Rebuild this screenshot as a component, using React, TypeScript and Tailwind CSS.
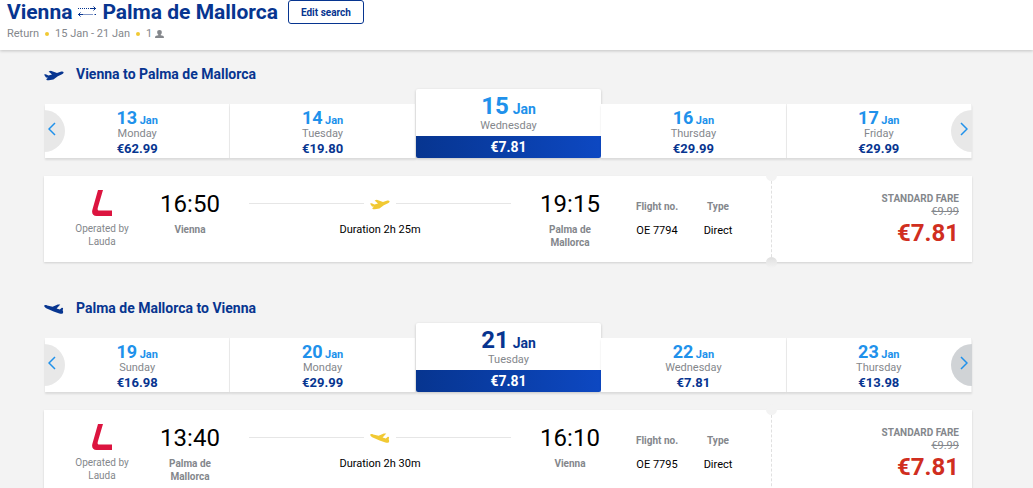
interface Fare {
  day: number;
  weekday: string;
  price: string;
}

interface Journey {
  id: string;
  from: string;
  to: string;
  direction: 'out' | 'back';
  fares: Fare[];
  departs: string;
  arrives: string;
  duration: string;
  flightNo: string;
}

const SELECTED = 2;

const journeys: Journey[] = [
  {
    id: 'outbound',
    from: 'Vienna',
    to: 'Palma de Mallorca',
    direction: 'out',
    fares: [
      { day: 13, weekday: 'Monday', price: '€62.99' },
      { day: 14, weekday: 'Tuesday', price: '€19.80' },
      { day: 15, weekday: 'Wednesday', price: '€7.81' },
      { day: 16, weekday: 'Thursday', price: '€29.99' },
      { day: 17, weekday: 'Friday', price: '€29.99' },
    ],
    departs: '16:50',
    arrives: '19:15',
    duration: '2h 25m',
    flightNo: 'OE 7794',
  },
  {
    id: 'inbound',
    from: 'Palma de Mallorca',
    to: 'Vienna',
    direction: 'back',
    fares: [
      { day: 19, weekday: 'Sunday', price: '€16.98' },
      { day: 20, weekday: 'Monday', price: '€29.99' },
      { day: 21, weekday: 'Tuesday', price: '€7.81' },
      { day: 22, weekday: 'Wednesday', price: '€7.81' },
      { day: 23, weekday: 'Thursday', price: '€13.98' },
    ],
    departs: '13:40',
    arrives: '16:10',
    duration: '2h 30m',
    flightNo: 'OE 7795',
  },
];

function Plane({ direction, className }: { direction: 'out' | 'back'; className: string }) {
  if (direction === 'out') {
    return (
      <svg viewBox="0 -3 20 14" className={`h-3.5 w-5 ${className}`} fill="currentColor" aria-hidden="true">
        <path d="M0 4.6 1.8 4.2 4.4 5.4 8 4.4 4.6 1.6 6.8.8 13 3 16.6 1.8C18 1.4 19.3 1.5 19.6 2.3 19.8 3.1 18.8 4 17.5 4.6L13.8 6.2 9.4 9.6 4.8 10.3C3 10.5 2.2 9.9 2.4 9L4 7.8 2 7.5Z" />
      </svg>
    );
  }
  return (
    <svg viewBox="0 -2 20 14" className={`h-3.5 w-5 ${className}`} fill="currentColor" aria-hidden="true">
      <path d="M.2 2.6C.5 1.9 1.8 1.9 3.2 2.4L8.6 3.8 13.8 1.5 16.3 1.6 12.6 5.4 15.8 6.6 17.8 4.8 19.1 5.1 18.7 7.5C19.3 8.6 19.3 9.6 18.8 10.2 18.2 11 16.6 10.8 15.4 10.4L9.6 8.6 2.2 5.2C.8 4.4 0 3.4.2 2.6Z" />
    </svg>
  );
}

function RouteArrows() {
  return (
    <svg viewBox="0 0 20 14" className="h-3.5 w-5" aria-hidden="true">
      <path d="M1 3.5H15" stroke="#073590" strokeDasharray="1 1" />
      <path d="M14 3.5H19M16.5 1.5 18.5 3.5 16.5 5.5" stroke="#073590" fill="none" />
      <path d="M5 9.5H16" stroke="#8398c8" />
      <path d="M1 9.5H6M3.5 7.5 1.5 9.5 3.5 11.5" stroke="#073590" fill="none" />
      <path d="M17.5 9.5H19" stroke="#073590" />
    </svg>
  );
}

function Person() {
  return (
    <svg viewBox="0 0 10 9" className="h-2 w-[9px]" fill="#84878c" aria-hidden="true">
      <path d="M5 0C6.8 0 7.6 1 7.6 2.4 7.6 3.6 7.1 4.6 6.4 5.2V5.8L8.8 6.4C9.7 6.7 10 7.6 10 9H0C0 7.6.3 6.7 1.2 6.4L3.6 5.8V5.2C2.9 4.6 2.4 3.6 2.4 2.4 2.4 1 3.2 0 5 0Z" />
    </svg>
  );
}

function LaudaLogo() {
  return (
    <svg viewBox="0 0 20 26" className="h-[26px] w-5" role="img" aria-label="Lauda">
      <path d="M6 0H11L5.8 17.8C5.3 19.6 5.8 20.6 7.4 20.6H20V26H4.6C1 26-.6 23.4.4 19.8Z" fill="#dc143f" />
    </svg>
  );
}

function Arrow({ side, dark }: { side: 'left' | 'right'; dark?: boolean }) {
  const shape = side === 'left' ? 'left-0 rounded-r-full pl-1' : 'right-0 rounded-l-full justify-end pr-1';
  return (
    <button
      type="button"
      aria-label={side === 'left' ? 'Earlier dates' : 'Later dates'}
      className={`absolute bottom-1.5 z-10 flex h-[42px] w-[21px] items-center pb-1 ${shape} ${dark ? 'bg-[#d0d3d6]' : 'bg-[#e8e8e8]'}`}
    >
      <svg viewBox="0 0 8 14" className="h-3.5 w-2 shrink-0" fill="none" stroke="#2091eb" strokeWidth="1.5">
        <path d={side === 'left' ? 'M7 1 1 7 7 13' : 'M1 1 7 7 1 13'} />
      </svg>
    </button>
  );
}

function DateTab({ fare, selected, navy }: { fare: Fare; selected: boolean; navy: boolean }) {
  if (selected) {
    return (
      <button
        type="button"
        aria-pressed="true"
        className="flex h-[69px] flex-col overflow-hidden rounded-xs bg-white text-center shadow-[0_1px_3px_rgba(0,0,0,0.2)]"
      >
        <span className={`block w-full pt-1 text-2xl leading-[27px] font-bold ${navy ? 'text-[#073590]' : 'text-[#2091eb]'}`}>
          {fare.day} <span className="-ml-0.5 text-sm leading-none">Jan</span>
        </span>
        <span className="block w-full text-[11px] leading-3 text-[#84878c]">{fare.weekday}</span>
        <span className="mt-auto block w-full bg-linear-to-r from-[#073590] to-[#0d48c2] text-sm leading-[22px] font-bold text-white">
          {fare.price}
        </span>
      </button>
    );
  }
  return (
    <button
      type="button"
      className="flex h-[54px] flex-col border-r border-[#f0f0f0] bg-white pt-1 text-center shadow-[0_2px_2px_rgba(0,0,0,0.1)]"
    >
      <span className="block w-full text-lg leading-5 font-bold text-[#2091eb]">
        {fare.day} <span className="-ml-0.5 text-[11px] leading-none">Jan</span>
      </span>
      <span className="block w-full text-[11px] leading-3 text-[#84878c]">{fare.weekday}</span>
      <span className="block w-full text-[13px] leading-[18px] font-bold text-[#073590]">{fare.price}</span>
    </button>
  );
}

function Stop({ time, place }: { time: string; place: string }) {
  return (
    <div className="w-[60px] pt-[15px] text-center">
      <p className="text-2xl leading-[26px] text-black">{time}</p>
      <p className="mt-1.5 text-[10px] leading-[13px] font-bold text-[#84878c]">{place}</p>
    </div>
  );
}

function FlightCard({ journey }: { journey: Journey }) {
  return (
    <article className="relative mt-[18px] flex h-[86px] bg-white shadow-[0_1px_2px_rgba(0,0,0,0.15)]">
      <div className="flex w-[116px] flex-col items-center px-7 pt-3.5 text-center">
        <LaudaLogo />
        <p className="mt-1.5 text-[10px] leading-[13px] text-[#84878c]">Operated by Lauda</p>
      </div>
      <Stop time={journey.departs} place={journey.from} />
      <div className="mx-[29px] min-w-0 flex-1 pt-5 text-center">
        <div className="flex items-center gap-1.5">
          <span className="h-px flex-1 bg-[#e6e6e6]" />
          <Plane direction={journey.direction} className="text-[#f1c933]" />
          <span className="h-px flex-1 bg-[#e6e6e6]" />
        </div>
        <p className="mt-[13px] text-[11px] leading-[13px] text-black">Duration {journey.duration}</p>
      </div>
      <Stop time={journey.arrives} place={journey.to} />
      <dl className="ml-4 flex pt-6 pr-[33px] text-center text-[11px] leading-[13px] text-black">
        <div className="w-[82px]">
          <dt className="text-[10px] font-bold text-[#84878c]">Flight no.</dt>
          <dd className="mt-[11px]">{journey.flightNo}</dd>
        </div>
        <div className="w-10">
          <dt className="text-[10px] font-bold text-[#84878c]">Type</dt>
          <dd className="mt-[11px]">Direct</dd>
        </div>
      </dl>
      <div className="relative w-[201px] border-l border-dashed border-[#e0e0e0] pt-4 pr-[13px] text-right">
        <span className="absolute -top-1.5 -left-1.5 size-[11px] rounded-full bg-[#f3f3f3]" />
        <span className="absolute -bottom-1.5 -left-1.5 size-[11px] rounded-full bg-linear-to-b from-[#dfdfdf] to-[#f3f3f3]" />
        <p className="text-[10px] leading-[13px] font-bold text-[#84878c]">STANDARD FARE</p>
        <p className="text-[11px] leading-[14px] text-[#84878c] line-through">€9.99</p>
        <p className="text-2xl leading-7 font-bold text-[#d02e20]">€7.81</p>
      </div>
    </article>
  );
}

export default function App() {
  return (
    <div className="h-screen overflow-hidden bg-[#f3f3f3] font-[Roboto,sans-serif]">
      <header className="h-[50px] bg-white px-[7px] shadow-[0_1px_3px_rgba(0,0,0,0.2)]">
        <div className="flex h-6 items-center">
          <h1 className="flex items-center gap-[5px] text-[21px] leading-6 font-bold text-[#073590]">
            Vienna
            <RouteArrows />
            Palma de Mallorca
          </h1>
          <button
            type="button"
            className="ml-2.5 h-6 w-[76px] rounded-[3px] border border-[#073590] text-[10px] font-bold text-[#073590]"
          >
            Edit search
          </button>
        </div>
        <p className="mt-[3px] flex items-center text-[11px] leading-[14px] text-[#84878c]">
          Return
          <span className="mx-1.5 size-1 rounded-full bg-[#f1c933]" />
          15 Jan - 21 Jan
          <span className="mx-1.5 size-1 rounded-full bg-[#f1c933]" />
          1
          <span className="ml-[3px]">
            <Person />
          </span>
        </p>
      </header>

      <main className="pr-[61px] pl-11">
        {journeys.map((journey) => (
          <section key={journey.id} className="mb-[22px] pt-3.5">
            <h2 className="flex h-5 items-center gap-3 text-sm font-bold text-[#073590]">
              <Plane direction={journey.direction} className="text-[#073590]" />
              {journey.from} to {journey.to}
            </h2>
            <div className="relative mt-[5px] grid grid-cols-5 items-end pl-px">
              <Arrow side="left" />
              {journey.fares.map((fare, i) => (
                <DateTab key={fare.day} fare={fare} selected={i === SELECTED} navy={journey.direction === 'back'} />
              ))}
              <Arrow side="right" dark={journey.direction === 'back'} />
            </div>
            <FlightCard journey={journey} />
          </section>
        ))}
      </main>
    </div>
  );
}
